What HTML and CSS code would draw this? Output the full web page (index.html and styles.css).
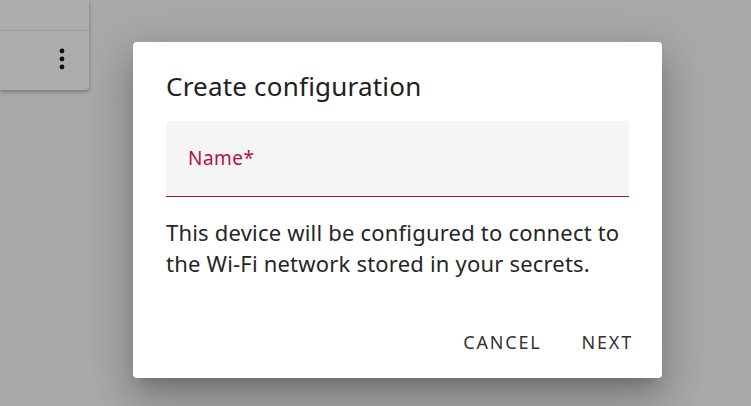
FILE: index.html
```html
<!DOCTYPE html>
<html lang="en">
<head>
    <meta charset="UTF-8">
    <meta name="viewport" content="width=device-width, initial-scale=1.0">
    <title>Create configuration</title>
    <link rel="stylesheet" href="styles.css">
</head>
<body>

<div class="card">
    <div class="card-row"></div>
    <div class="card-row card-actions">
        <button class="menu-button" aria-label="More">
            <svg width="6" height="22" viewBox="0 0 6 22">
                <circle cx="3" cy="3" r="2.4" fill="#1a1a1a"/>
                <circle cx="3" cy="11" r="2.4" fill="#1a1a1a"/>
                <circle cx="3" cy="19" r="2.4" fill="#1a1a1a"/>
            </svg>
        </button>
    </div>
</div>

<div class="backdrop"></div>

<div class="dialog">
    <h2 class="dialog-title">Create configuration</h2>

    <div class="field">
        <label for="name" class="field-label">Name*</label>
        <input type="text" id="name" class="field-input">
    </div>

    <p class="dialog-text">This device will be configured to connect to the Wi-Fi network stored in your secrets.</p>

    <div class="dialog-actions">
        <button type="button" class="text-button">Cancel</button>
        <button type="button" class="text-button">Next</button>
    </div>
</div>

</body>
</html>
```

FILE: styles.css
```css
body {
    margin: 0;
    padding: 0;
    font-family: "Noto Sans", "Open Sans", sans-serif;
    background-color: #fafafa;
    height: 100vh;
    overflow: hidden;
}

.card {
    width: 89px;
    background-color: #ffffff;
    border-bottom-right-radius: 4px;
    box-shadow: 0px 2px 4px rgba(0, 0, 0, 0.3);
}

.card-row {
    height: 30px;
    border-bottom: 1px solid #e6e6e6;
}

.card-actions {
    height: 59px;
    border-bottom: none;
    display: flex;
    justify-content: flex-end;
    align-items: center;
    padding-right: 24px;
}

.menu-button {
    background: none;
    border: none;
    padding: 0;
    display: flex;
    margin-top: -4px;
}

.backdrop {
    position: absolute;
    inset: 0;
    background-color: rgba(0, 0, 0, 0.32);
}

.dialog {
    position: absolute;
    left: 133px;
    top: 42px;
    width: 529px;
    height: 336px;
    box-sizing: border-box;
    padding: 0 33px;
    background-color: #ffffff;
    border-radius: 4px;
    box-shadow: 0px 11px 15px -7px rgba(0, 0, 0, 0.2), 0px 24px 38px 3px rgba(0, 0, 0, 0.14), 0px 9px 46px 8px rgba(0, 0, 0, 0.12);
    display: flex;
    flex-direction: column;
}

.dialog-title {
    margin: 0;
    padding-top: 25px;
    font-size: 26px;
    font-weight: 400;
    letter-spacing: 0.2px;
    line-height: 38px;
    color: #212121;
}

.field {
    margin-top: 16px;
    height: 76px;
    background-color: #f5f5f5;
    border-top-left-radius: 4px;
    border-top-right-radius: 4px;
    border-bottom: 1px solid #a8123f;
    box-sizing: border-box;
    position: relative;
}

.field-label {
    position: absolute;
    left: 22px;
    top: 25px;
    font-size: 19px;
    letter-spacing: 0.5px;
    line-height: 24px;
    color: #b5123e;
}

.field-input {
    position: absolute;
    left: 22px;
    right: 22px;
    bottom: 10px;
    border: none;
    outline: none;
    background: transparent;
    font: inherit;
    font-size: 18px;
}

.dialog-text {
    margin: 20px 0 0 0;
    font-size: 22px;
    line-height: 31px;
    letter-spacing: 0.2px;
    color: #262626;
}

.dialog-actions {
    margin-top: auto;
    margin-right: -17px;
    padding-bottom: 18px;
    display: flex;
    justify-content: flex-end;
    gap: 14px;
}

.text-button {
    background: none;
    border: none;
    padding: 0 13px;
    height: 36px;
    font-family: inherit;
    font-size: 18px;
    letter-spacing: 1.8px;
    text-transform: uppercase;
    color: #333333;
    cursor: pointer;
}
```
